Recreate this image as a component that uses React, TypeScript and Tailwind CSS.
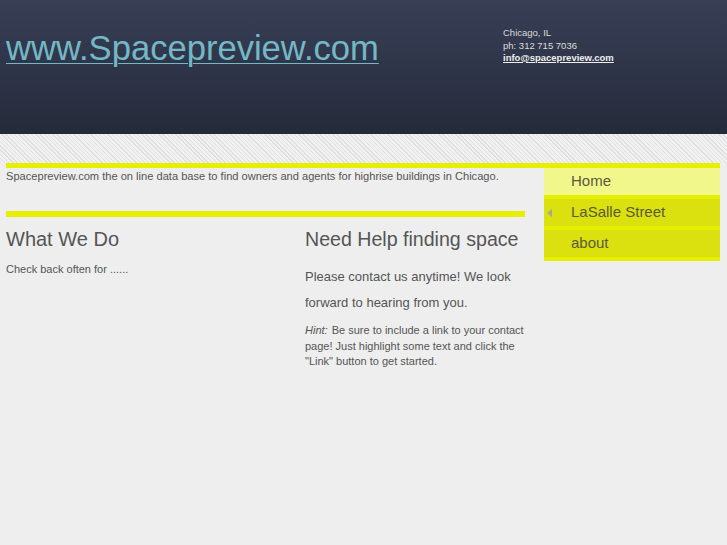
import React from "react";

const navItems = [
  { label: "Home", active: true },
  { label: "LaSalle Street", arrow: true },
  { label: "about" },
];

export default function App() {
  return (
    <div className="w-[727px] h-[545px] overflow-hidden bg-[#eeeeee] font-['Liberation_Sans',Arial,sans-serif] text-[#555]">
      {/* Header */}
      <header className="h-[134px] flex bg-[linear-gradient(180deg,#383f55_0%,#2f3549_50%,#252a3a_100%)]">
        <div className="w-[503px] pl-[6px] pt-[28px]">
          <a href="#" className="text-[34.6px] leading-[40px] text-[#74b8c6] underline decoration-1 underline-offset-[3px]">
            www.Spacepreview.com
          </a>
        </div>
        <div className="pt-[27px] text-[9.5px] leading-[12.5px] text-[#dcdcdc]">
          <p>Chicago, IL</p>
          <p>ph: 312 715 7036</p>
          <a href="#" className="font-bold underline text-[#eeeeee]">info@spacepreview.com</a>
        </div>
      </header>

      {/* Striped band */}
      <div className="h-[29px] bg-[repeating-linear-gradient(45deg,#e0e0e0_0px,#e0e0e0_1px,#f1f1f1_1px,#f1f1f1_3px)]" />

      <div className="px-[6px]">
        <div className="w-[714px] h-[5px] bg-[#e6ef00]" />
        <div className="flex gap-[19px]">
          {/* Main column */}
          <div className="w-[519px]">
            <p className="pt-[1px] text-[11.1px] leading-[14px]">
              Spacepreview.com the on line data base to find owners and agents for highrise buildings in Chicago.
            </p>
            <div className="mt-[28px] h-[6px] bg-[#e6ef00]" />
            <div className="flex">
              <div className="w-[299px]">
                <h2 className="mt-[10px] text-[20px] leading-[24px]">What We Do</h2>
                <p className="mt-[11px] text-[11px] leading-[14px]">Check back often for ......</p>
              </div>
              <div className="w-[220px]">
                <h2 className="mt-[10px] text-[19.6px] leading-[24px]">Need Help finding space</h2>
                <p className="mt-[13px] text-[13px] leading-[26px]">
                  Please contact us anytime! We look forward to hearing from you.
                </p>
                <p className="mt-[7px] text-[11px] leading-[15.5px]">
                  <em className="pr-[1px]">Hint:</em> Be sure to include a link to your contact page! Just highlight some text and click the "Link" button to get started.
                </p>
              </div>
            </div>
          </div>

          {/* Navigation */}
          <nav className="w-[176px]">
            {navItems.map((item) => (
              <div
                key={item.label}
                className={`relative h-[31px] border-b-[4px] border-[#e6ef00] pl-[27px] text-[15px] leading-[26px] text-[#5a5a3a] ${
                  item.active ? "bg-[#f2f78c]" : "bg-[#dbe00f]"
                }`}
              >
                {item.arrow && (
                  <span className="absolute left-[3px] top-[10px] w-0 h-0 border-y-[4px] border-y-transparent border-r-[5px] border-r-[#a8a890]" />
                )}
                {item.label}
              </div>
            ))}
          </nav>
        </div>
      </div>
    </div>
  );
}
